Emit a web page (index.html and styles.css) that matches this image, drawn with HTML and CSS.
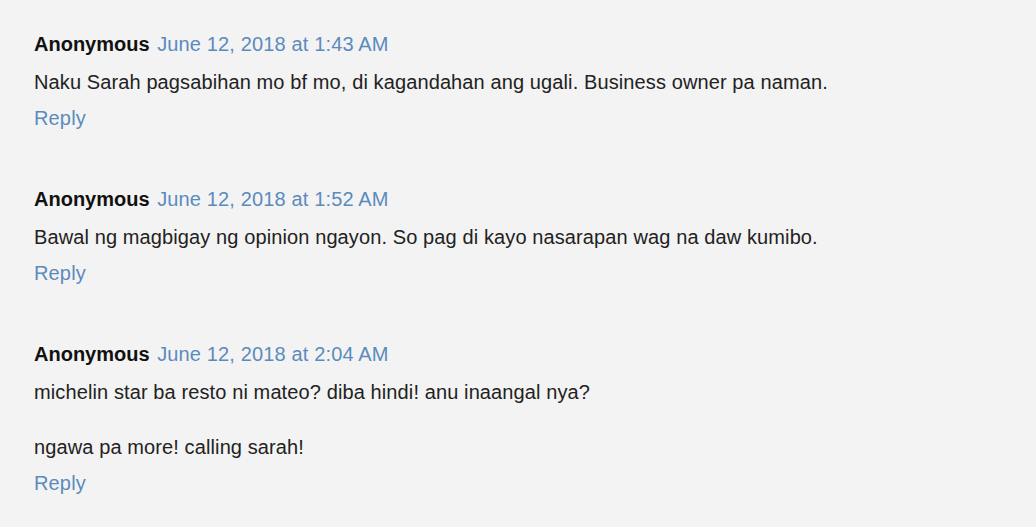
FILE: index.html
```html
<!DOCTYPE html>
<html>
<head>
<meta charset="utf-8">
<link rel="stylesheet" href="styles.css">
</head>
<body>
<div class="comments">
  <div class="comment">
    <div class="head"><span class="user">Anonymous</span> <a class="date" href="#">June 12, 2018 at 1:43 AM</a></div>
    <p class="content">Naku Sarah pagsabihan mo bf mo, di kagandahan ang ugali. Business owner pa naman.</p>
    <div class="actions"><a class="reply" href="#">Reply</a></div>
  </div>
  <div class="comment">
    <div class="head"><span class="user">Anonymous</span> <a class="date" href="#">June 12, 2018 at 1:52 AM</a></div>
    <p class="content">Bawal ng magbigay ng opinion ngayon. So pag di kayo nasarapan wag na daw kumibo.</p>
    <div class="actions"><a class="reply" href="#">Reply</a></div>
  </div>
  <div class="comment">
    <div class="head"><span class="user">Anonymous</span> <a class="date" href="#">June 12, 2018 at 2:04 AM</a></div>
    <p class="content">michelin star ba resto ni mateo? diba hindi! anu inaangal nya?<br><br>ngawa pa more! calling sarah!</p>
    <div class="actions"><a class="reply" href="#">Reply</a></div>
  </div>
</div>
</body>
</html>
```
FILE: styles.css
```css
html, body {
  margin: 0;
  padding: 0;
  background: #f3f3f3;
}
body {
  font-family: "Liberation Sans", Arial, sans-serif;
  font-size: 20px;
  line-height: 27.5px;
  color: #222;
}
.comments {
  padding: 31px 34px 0 34px;
  display: flex;
  flex-direction: column;
  gap: 53.5px;
}
.comment {
  display: flex;
  flex-direction: column;
}
.head {
  white-space: nowrap;
}
.user {
  font-weight: bold;
  color: #111;
  margin-right: 2px;
}
.date, .reply {
  color: #5b8bbd;
  text-decoration: none;
  letter-spacing: 0.15px;
}
.content {
  margin: 10.5px 0 8.5px 0;
  letter-spacing: 0.11px;
}
```
